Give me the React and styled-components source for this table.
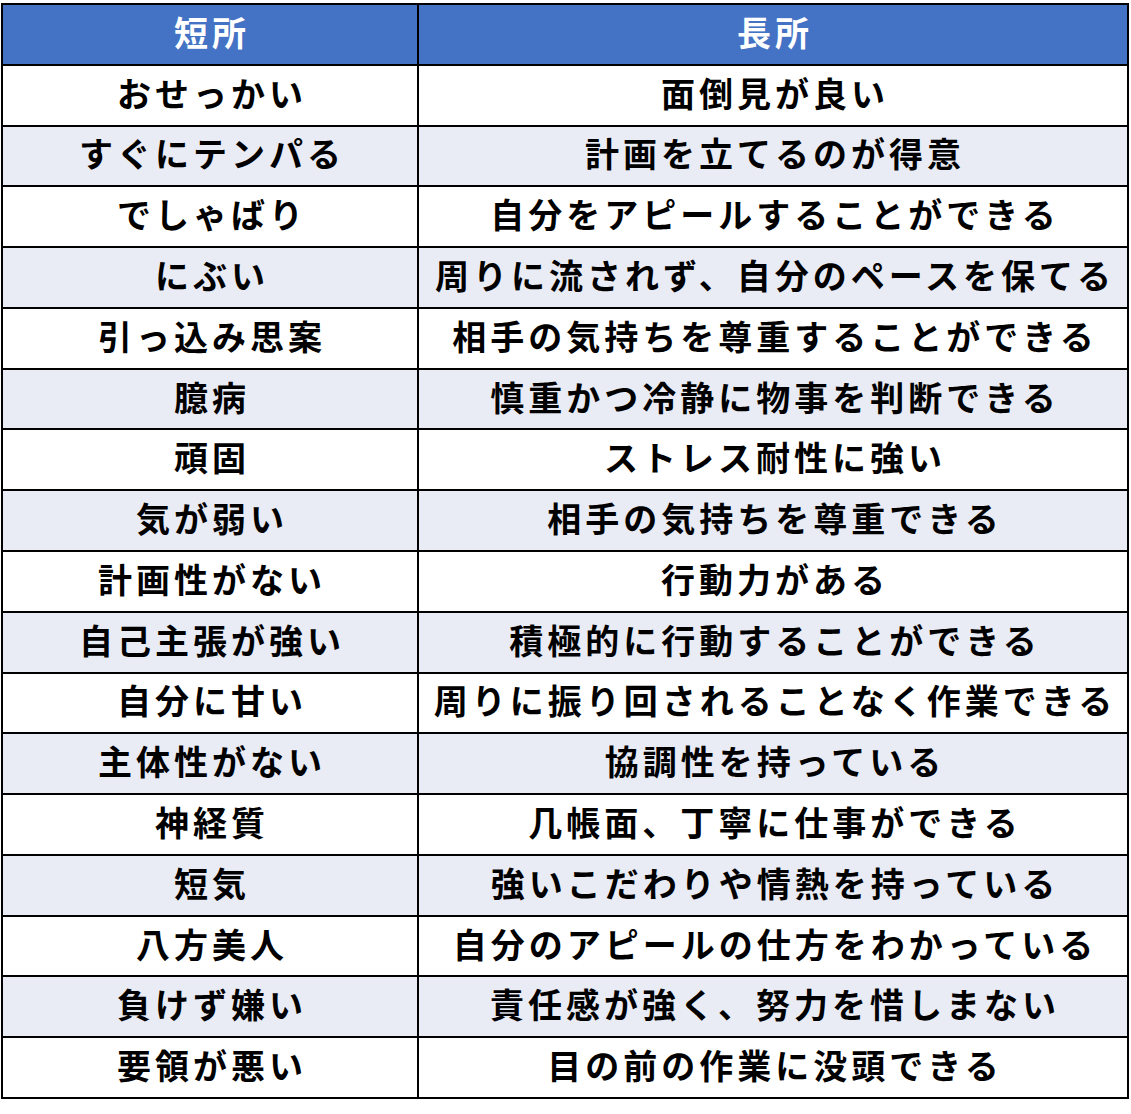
import React from 'react';
import styled, { createGlobalStyle } from 'styled-components';

const GlobalStyle = createGlobalStyle`
    html, body {
        margin: 0;
        padding: 0;
        background: #fff;
    }
    body {
        font-family: "Noto Sans CJK JP", "Noto Sans", sans-serif;
    }
`;

const Page = styled.div`
    padding: 3px 0 0 1px;
`;

const Table = styled.div`
    display: grid;
    grid-template-columns: 414px 1fr;
    grid-template-rows: repeat(18, 1fr);
    gap: 2px;
    padding: 2px;
    width: 1128px;
    height: 1096px;
    box-sizing: border-box;
    background: #000;
`;

const Cell = styled.div`
    display: flex;
    align-items: center;
    justify-content: center;
    background: ${p => (p.$head ? '#4472c4' : p.$alt ? '#e9ebf5' : '#fff')};
    color: ${p => (p.$head ? '#fff' : '#000')};
    font-size: 34px;
    font-weight: 700;
    letter-spacing: 4px;
    white-space: nowrap;
    line-height: 1;
    padding: 0 0 5px 4px;
`;

const rows = [
    ['おせっかい', '面倒見が良い'],
    ['すぐにテンパる', '計画を立てるのが得意'],
    ['でしゃばり', '自分をアピールすることができる'],
    ['にぶい', '周りに流されず、自分のペースを保てる'],
    ['引っ込み思案', '相手の気持ちを尊重することができる'],
    ['臆病', '慎重かつ冷静に物事を判断できる'],
    ['頑固', 'ストレス耐性に強い'],
    ['気が弱い', '相手の気持ちを尊重できる'],
    ['計画性がない', '行動力がある'],
    ['自己主張が強い', '積極的に行動することができる'],
    ['自分に甘い', '周りに振り回されることなく作業できる'],
    ['主体性がない', '協調性を持っている'],
    ['神経質', '几帳面、丁寧に仕事ができる'],
    ['短気', '強いこだわりや情熱を持っている'],
    ['八方美人', '自分のアピールの仕方をわかっている'],
    ['負けず嫌い', '責任感が強く、努力を惜しまない'],
    ['要領が悪い', '目の前の作業に没頭できる'],
];

const App = () => (
    <Page>
        <GlobalStyle />
        <Table>
            <Cell $head>短所</Cell>
            <Cell $head>長所</Cell>
            {rows.map(([bad, good], i) => (
                <React.Fragment key={bad}>
                    <Cell $alt={i % 2 === 1}>{bad}</Cell>
                    <Cell $alt={i % 2 === 1}>{good}</Cell>
                </React.Fragment>
            ))}
        </Table>
    </Page>
);

export default App;
